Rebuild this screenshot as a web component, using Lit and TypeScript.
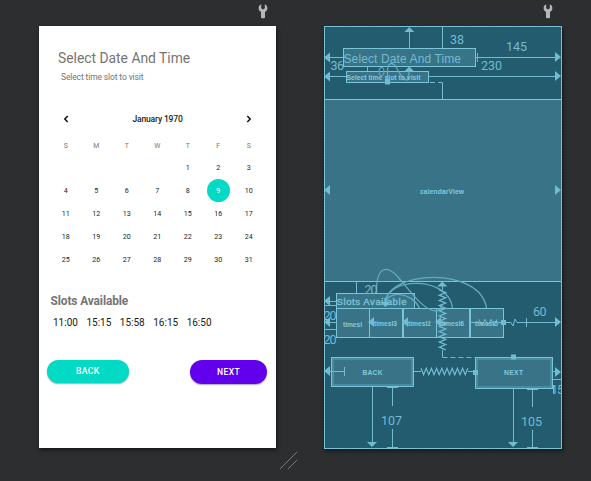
import { LitElement, html, svg, css } from "lit";
import { customElement } from "lit/decorators.js";

const WEEKDAYS = ["S", "M", "T", "W", "T", "F", "S"];
const SLOTS = ["11:00", "15:15", "15:58", "16:15", "16:50"];

@customElement("tool-wrench")
class ToolWrench extends LitElement {
  static styles = css`
    :host { display: block; width: 10px; height: 15px; }
    svg { display: block; }
    path { fill: #b4b6b8; }
  `;
  render() {
    return html`<svg width="10" height="15" viewBox="0 0 10 15">
      <path d="M3.2 .2V4.3L5 5.4 6.8 4.3V.2C8.6 .8 9.4 2.5 9.4 4.2 9.4 6 8.4 7.2 7 7.9V13.2Q7 14.3 5.9 14.3H4.1Q3 14.3 3 13.2V7.9C1.6 7.2.6 6 .6 4.2.6 2.5 1.4.8 3.2.2Z" />
    </svg>`;
  }
}

@customElement("design-preview")
class DesignPreview extends LitElement {
  static styles = css`
    :host {
      display: flex; flex-direction: column; box-sizing: border-box;
      width: 237px; height: 422px; background: #fff; color: #757575;
      box-shadow: 1px 2px 4px rgba(0, 0, 0, .55);
      font-family: Roboto, sans-serif;
    }
    .title { margin: 24px 0 0 19px; font-size: 13.85px; line-height: 16px; white-space: nowrap; }
    .subtitle { margin: 6px 0 0 22px; font-size: 8.5px; letter-spacing: -.13px; line-height: 11px; white-space: nowrap; }
    .month { display: flex; align-items: center; justify-content: space-between; height: 14px; margin: 29px 24px 0 24px; color: #1c1c1c; font-size: 8.5px; letter-spacing: -.15px; font-weight: 500; }
    .month svg { width: 6px; height: 8px; fill: none; stroke: #111; stroke-width: 1.5; }
    .grid { display: grid; grid-template-columns: repeat(7, 30.5px); grid-template-rows: 20px repeat(5, 23px); margin: 10px 0 0 11.5px; text-align: center; align-items: center; justify-items: center; color: #222; font-size: 7.1px; }
    .weekday { color: #777; font-size: 6.9px; }
    .day { width: 23px; height: 23px; line-height: 23px; border-radius: 50%; }
    .selected { background: #03dac5; color: #fff; }
    .heading { margin: 23px 0 0 11.5px; font-size: 11.9px; letter-spacing: -.1px; line-height: 14px; font-weight: 700; white-space: nowrap; }
    .slots { display: flex; gap: 8.5px; margin: 8px 0 0 14px; color: #202020; font-size: 10px; line-height: 14px; }
    .actions { display: flex; justify-content: space-between; align-items: flex-start; margin: 30px 9px 0 8px; }
    .button { height: 23px; width: 81.5px; line-height: 23.5px; border-radius: 12px; text-align: center; font-size: 8.5px; font-weight: 500; letter-spacing: .45px; color: #fff; box-shadow: 0 1px 1.5px rgba(0, 0, 0, .35); }
    .back { background: #03dac5; }
    .next { background: #6200ee; width: 77px; height: 24px; line-height: 24px; }
  `;
  render() {
    const days = Array.from({ length: 31 }, (_, i) => i + 1);
    return html`
      <div class="title">Select Date And Time</div>
      <div class="subtitle">Select time slot to visit</div>
      <div class="month">
        <svg viewBox="0 0 6 8"><path d="M4.7 1 1.8 4 4.7 7" /></svg>
        <span>January 1970</span>
        <svg viewBox="0 0 6 8"><path d="M1.3 1 4.2 4 1.3 7" /></svg>
      </div>
      <div class="grid">
        ${WEEKDAYS.map((d) => html`<span class="weekday">${d}</span>`)}
        ${[0, 1, 2, 3].map(() => html`<span></span>`)}
        ${days.map((d) => html`<span class="day ${d === 9 ? "selected" : ""}">${d}</span>`)}
      </div>
      <div class="heading">Slots Available</div>
      <div class="slots">${SLOTS.map((s) => html`<span>${s}</span>`)}</div>
      <div class="actions">
        <div class="button back">BACK</div>
        <div class="button next">NEXT</div>
      </div>
    `;
  }
}

type Label = [text: string, x: number, y: number, width: number];

const DIMENSIONS: Label[] = [
  ["38", 450, 44, 14], ["145", 506, 51, 21], ["230", 481, 70, 21],
  ["36", 330.5, 70, 13.5], ["20", 364.5, 294, 13], ["20", 323.5, 320, 13],
  ["20", 323.5, 344, 13], ["60", 533, 316, 13.5], ["107", 381, 425, 21],
  ["105", 521, 426, 21], ["15", 551, 394, 13],
];
const NAMES: Label[] = [
  ["Select time slot to visit", 346.5, 79.5, 74], ["calendarView", 420, 193.5, 44],
  ["timesl", 343, 326.5, 19], ["timesl3", 374, 326, 23], ["timesl2", 408, 326, 23],
  ["timesl6", 441, 326, 23], ["timesl5", 475, 326, 23],
  ["BACK", 362.5, 375, 20], ["NEXT", 504, 375, 19],
];
const LEFT = [[325, 57.5], [325, 76.5], [325, 190], [325, 301], [325, 322], [325, 371], [369, 322], [403, 322], [436, 322]];
const RIGHT = [[561, 57], [561, 76], [561, 190], [561, 322], [561, 372]];
const UP = [[409.3, 27], [409.3, 66.5], [442.3, 281.5]];
const DOWN = [[372, 447], [513, 447], [385.5, 307]];
const CELLS = [336.5, 369.5, 403.5, 436.5, 470.5];
const HANDLES = [[387.5, 82], [503.5, 322.5], [513.5, 357], [475.5, 372.5]];

// Spring drawn as alternating offsets around an axis.
const spring = (from: number, to: number, axis: number, step: number, vertical: boolean) => {
  const pts: string[] = [];
  for (let p = from, i = 0; p <= to; p += step, i++) {
    const off = axis + (i % 2 ? 3.2 : -3.2);
    pts.push(vertical ? `${off},${p}` : `${p},${off}`);
  }
  return pts.join(" ");
};

@customElement("blueprint-view")
class BlueprintView extends LitElement {
  static styles = css`
    :host { display: block; width: 238px; height: 423px; box-shadow: 1px 2px 4px rgba(0, 0, 0, .55); }
    svg { display: block; background: #235c6f; }
    .edge { fill: none; stroke: #5fa9bf; }
    .frame { fill: none; stroke: #86cce0; stroke-dasharray: 2 1; }
    .box { fill: #387387; stroke: #7bc5da; }
    .inner { fill: none; stroke: #5ba3b8; }
    .line { fill: none; stroke: #74bbd0; }
    .spring { fill: none; stroke: #74bbd0; stroke-width: 1.25; }
    .curve { fill: none; stroke: #64abc1; stroke-width: 1.3; }
    .dashed { fill: none; stroke: #74bbd0; stroke-dasharray: 5 3; }
    .solid { fill: #72bbd1; }
    .dimension { fill: #72bbd1; font: 12.5px Roboto, sans-serif; }
    .faint { fill: #5fa5ba; }
    .heading { fill: #72bbd1; font: 12px "Liberation Sans", sans-serif; }
    .slots { fill: #7bc3d7; font: 9.6px "Liberation Sans", sans-serif; stroke: #7bc3d7; stroke-width: .35; }
    .name { fill: #82cadd; font: bold 6.7px "Liberation Sans", sans-serif; }
  `;
  label = ([t, x, y, w]: Label, cls: string) =>
    svg`<text class=${cls} x=${x} y=${y} textLength=${w}>${t}</text>`;
  render() {
    return html`<svg width="238" height="423" viewBox="324 26 238 423">
      <rect class="box" x="324.5" y="99.5" width="237" height="182" />
      <rect class="box" x="343.5" y="48.5" width="132" height="18" />
      <rect class="box" x="346.5" y="71.5" width="82" height="11" />
      <rect class="box" x="336.5" y="293.5" width="78" height="15" />
      ${CELLS.map((x) => svg`<rect class="box" x=${x} y="308.5" width="33" height="29" />`)}
      <rect class="box" x="331.5" y="357.5" width="82" height="29" />
      <rect class="inner" x="333" y="359" width="79" height="26" />
      <rect class="box" x="475.5" y="357.5" width="77" height="31" />
      <rect class="inner" x="477" y="359" width="74" height="28" />
      <rect class="edge" x="324.5" y="26.5" width="237" height="422" />
      <rect class="frame" x="324.5" y="26.5" width="237" height="422" />

      <path class="line" d="M409.5 31V48M442.5 27V48M367.5 67V71M330 57.5H346M330 76.5H346M476 57.5H556M477.5 53V62M429 76.5H556" />
      <path class="dashed" d="M430 82.5H442.5" />
      <path class="line" d="M442.5 82.5V99" />
      <path class="curve" d="M387.5 81V70C388 62 393 62 396 67S402 79 407 80Q409 80 409 71" />

      <path class="line" d="M356.5 281V293M330 301.5H337M324 305.5H337M330 322.5H337M324 329.5H337" />
      <path class="curve" d="M376.5 293C376 264 388 266 398 277S423 311 436 311Q440 311 442 305" />
      <path class="curve" d="M385.5 303C387 270 480 266 486.5 308" />
      <path class="curve" d="M385.5 303C386 276 449 276 452.5 308" />
      <path class="curve" d="M385.5 303C388 290 412 292 419.5 308" />
      <polyline class="spring" points=${spring(290, 350, 442.5, 2.6, true)} />
      <path class="line" d="M442.5 286V290M442.5 350V357" />
      <path class="dashed" d="M442.5 357.5H475" />
      <polyline class="line" points=${spring(479, 498, 322.5, 3, false)} />
      <path class="line" d="M470 322.5H479M498 322.5H511L513 326 515 319 517 322.5H526M526.5 318V327M526.5 322.5H556" />

      <path class="line" d="M414 371.5H421M468 371.5H475M330 371.5H344.5M344.5 367V376M552 371.5H556M552 379.5H562M553.5 385V394" />
      <polyline class="spring" points=${spring(421, 468, 371.5, 2.6, false)} />
      <path class="line" d="M372.5 387V442M392.5 387V406M392.5 429V448M387 387.5H398M387 447.5H398" />
      <path class="line" d="M513.5 389V442M532.5 389V407M532.5 430V448M527 389.5H538M527 447.5H538" />

      ${LEFT.map(([x, y]) => svg`<path class="solid" d="M${x - 1} ${y}l6-5v10z" />`)}
      ${RIGHT.map(([x, y]) => svg`<path class="solid" d="M${x} ${y}l-6-5v10z" />`)}
      ${UP.map(([x, y]) => svg`<path class="solid" d="M${x} ${y}l5 5h-10z" />`)}
      ${DOWN.map(([x, y]) => svg`<path class="solid" d="M${x} ${y}l5-5h-10z" />`)}
      ${HANDLES.map(([x, y]) => svg`<rect class="solid" x=${x - 2.5} y=${y - 2.5} width="5" height="5" />`)}

      <text class="heading" x="343.5" y="63" textLength="117.5">Select Date And Time</text>
      <text class="slots" x="336.5" y="305" textLength="70">Slots Available</text>
      ${DIMENSIONS.map((l) => this.label(l, "dimension"))}
      <text class="dimension faint" x="378" y="76">0</text>
      ${NAMES.map((l) => this.label(l, "name"))}
    </svg>`;
  }
}

@customElement("app-root")
class AppRoot extends LitElement {
  static styles = css`
    :host { display: block; width: 591px; height: 481px; overflow: hidden; background: #2d2e30; }
    .surface { display: grid; grid-template-columns: 237px 238px; column-gap: 48px; padding: 4px 0 0 39px; }
    .pane { display: flex; flex-direction: column; gap: 7px; }
    .tool { align-self: flex-end; margin-right: 8px; }
    .second { margin-right: 9px; }
    .resize { display: block; margin: 3px 0 0 280px; fill: none; stroke: #77797b; }
  `;
  render() {
    return html`
      <div class="surface">
        <div class="pane"><tool-wrench class="tool"></tool-wrench><design-preview></design-preview></div>
        <div class="pane"><tool-wrench class="tool second"></tool-wrench><blueprint-view></blueprint-view></div>
      </div>
      <svg class="resize" width="18" height="18" viewBox="0 0 18 18"><path d="M0 17 17 0M8 17 17 8" /></svg>
    `;
  }
}
